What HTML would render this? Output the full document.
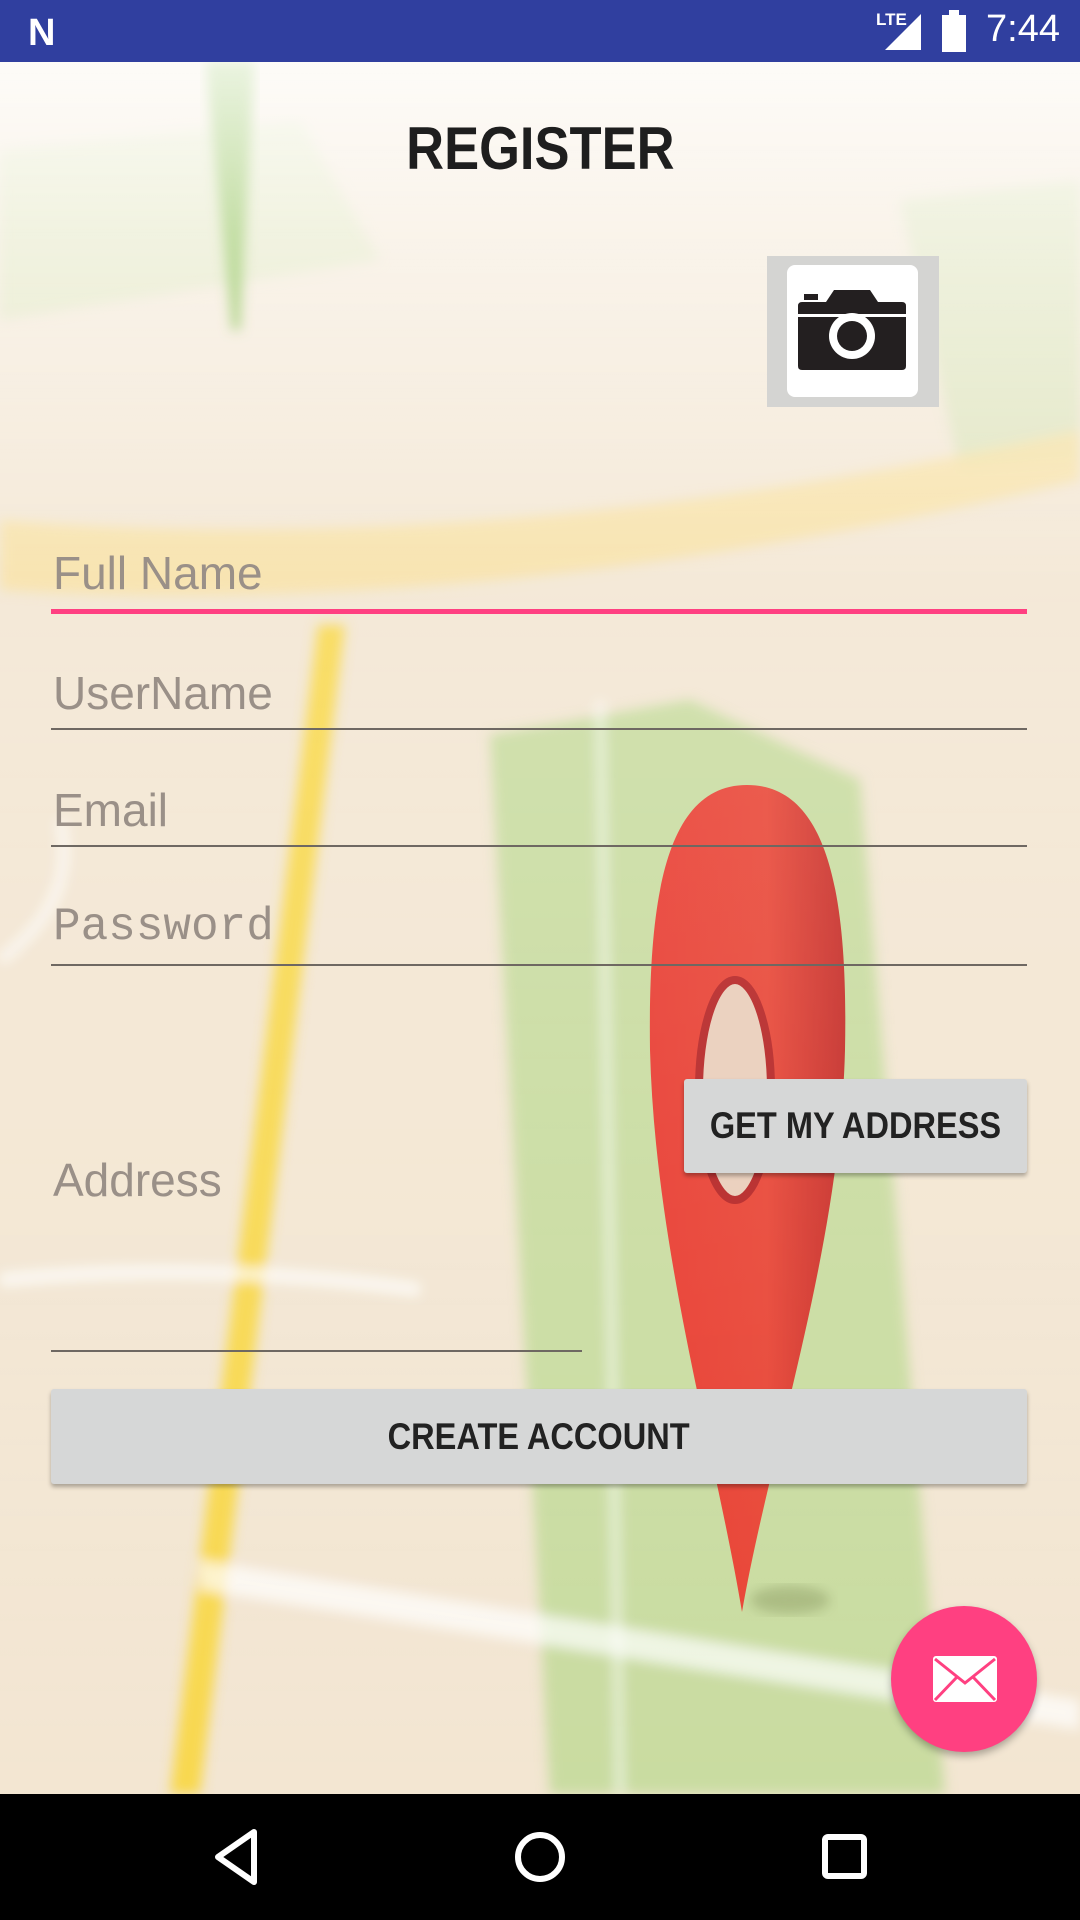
<!DOCTYPE html>
<html><head><meta charset="utf-8"><style>
html,body{margin:0;padding:0}
body{width:1080px;height:1920px;position:relative;overflow:hidden;font-family:"Liberation Sans",sans-serif;background:#f4e8d6}
.abs{position:absolute}
.hint{position:absolute;left:53px;font-size:46px;color:#9a9088;line-height:1}
.line{position:absolute;left:51px;width:976px;height:2px;background:#6e6862}
.btn{position:absolute;background:#d6d7d7;box-shadow:0 3px 4px rgba(0,0,0,.3);border-radius:3px;display:flex;align-items:center;justify-content:center;font-size:37px;font-weight:bold;color:#222}
.btn span{display:inline-block;transform:scaleX(.88)}
</style></head><body>
<svg class="abs" style="left:0;top:0" width="1080" height="1920" viewBox="0 0 1080 1920">
<defs>
<linearGradient id="fade" x1="0" y1="0" x2="0" y2="1">
<stop offset="0" stop-color="#fff" stop-opacity=".95"/><stop offset=".12" stop-color="#fff" stop-opacity=".55"/><stop offset=".3" stop-color="#fff" stop-opacity=".15"/><stop offset="1" stop-color="#fff" stop-opacity="0"/></linearGradient>
<linearGradient id="pin" x1="0" y1="0" x2="1" y2="0"><stop offset="0" stop-color="#e8392e"/><stop offset=".6" stop-color="#e84434"/><stop offset="1" stop-color="#c42a25"/></linearGradient>
<filter id="b"><feGaussianBlur stdDeviation="6"/></filter>
</defs>
<rect width="1080" height="1920" fill="#f3e6d2"/>
<g filter="url(#b)">
<path d="M0 150 L300 120 L380 260 L0 320Z" fill="#d9e2b4" opacity=".7"/>
<path d="M900 200 L1080 180 L1080 460 L960 470Z" fill="#cfe0a8" opacity=".6"/>
<path d="M490 735 L690 700 L860 780 L945 1794 L550 1794Z" fill="#c9dca0"/>
<path d="M0 520 Q500 560 1080 430 L1080 480 Q500 620 0 590Z" fill="#f7df9a" opacity=".8"/>
<path d="M318 625 L345 625 L200 1794 L170 1794Z" fill="#f8d84e"/>
<path d="M200 1560 L1080 1700 L1080 1730 L200 1590Z" fill="#fff" opacity=".7"/>
<path d="M0 1280 Q200 1260 420 1290" stroke="#fff" stroke-width="14" fill="none" opacity=".7"/>
<path d="M600 700 L620 1794" stroke="#fff" stroke-width="10" fill="none" opacity=".5"/>
<path d="M0 960 Q80 900 60 820" stroke="#fff" stroke-width="12" fill="none" opacity=".6"/>
</g>
<path d="M205 60 L255 60 L240 330 L232 330Z" fill="#7fb83e" filter="url(#b)"/>
<ellipse cx="790" cy="1600" rx="40" ry="14" fill="#8a9a60" opacity=".5" filter="url(#b)"/>
<path d="M747 785 C830 785 848 900 845 1050 C840 1250 770 1450 742 1612 C715 1450 655 1250 650 1050 C648 900 665 785 747 785Z" fill="url(#pin)"/>
<ellipse cx="735" cy="1090" rx="36" ry="110" fill="#e9cdb9"/>
<ellipse cx="735" cy="1090" rx="36" ry="110" fill="none" stroke="#b52222" stroke-width="8"/>
<rect width="1080" height="1920" fill="url(#fade)"/>
</svg>
<!-- status bar -->
<div class="abs" style="left:0;top:0;width:1080px;height:62px;background:#303f9f"></div>
<div class="abs" style="left:28px;top:12px;color:#fff;font-size:38px;font-weight:bold">N</div>
<div class="abs" style="left:876px;top:10px;color:#fff;font-size:17px;font-weight:bold">LTE</div>
<svg class="abs" style="left:885px;top:14px" width="38" height="36"><path d="M36 0 L36 36 L0 36Z" fill="#fff"/></svg>
<svg class="abs" style="left:942px;top:10px" width="24" height="42"><rect x="0" y="5" width="24" height="37" fill="#fff"/><rect x="7" y="0" width="10" height="6" fill="#fff"/></svg>
<div class="abs" style="left:986px;top:8px;color:#fff;font-size:38px">7:44</div>
<!-- title -->
<div class="abs" style="left:0;width:1080px;top:114px;text-align:center;font-size:60px;font-weight:bold;color:#1e1e1e"><span style="display:inline-block;transform:scaleX(.875)">REGISTER</span></div>
<!-- camera -->
<div class="abs" style="left:767px;top:256px;width:172px;height:151px;background:#d4d4d2"></div>
<div class="abs" style="left:787px;top:265px;width:131px;height:132px;background:#fff;border-radius:8px"></div>
<svg class="abs" style="left:796px;top:288px" width="112" height="84" viewBox="0 0 112 84"><path d="M6 14 H30 L38 2 H74 L82 14 H106 Q110 14 110 18 V78 Q110 82 106 82 H6 Q2 82 2 78 V18 Q2 14 6 14Z" fill="#231f20"/><rect x="8" y="6" width="14" height="6" fill="#231f20"/><rect x="2" y="26" width="108" height="3" fill="#fff"/><circle cx="56" cy="48" r="23" fill="#fff"/><circle cx="56" cy="48" r="15" fill="#231f20"/></svg>
<!-- fields -->
<div class="hint" style="top:550px">Full Name</div>
<div class="abs" style="left:51px;top:609px;width:976px;height:5px;background:#ff4081"></div>
<div class="hint" style="top:670px">UserName</div>
<div class="line" style="top:728px"></div>
<div class="hint" style="top:787px">Email</div>
<div class="line" style="top:845px"></div>
<div class="hint" style="top:904px;font-family:'Liberation Mono',monospace;font-size:46px">Password</div>
<div class="line" style="top:964px"></div>
<div class="btn" style="left:684px;top:1079px;width:343px;height:94px"><span>GET MY ADDRESS</span></div>
<div class="hint" style="top:1157px">Address</div>
<div class="line" style="top:1350px;width:531px"></div>
<div class="btn" style="left:51px;top:1389px;width:976px;height:95px"><span>CREATE ACCOUNT</span></div>
<!-- fab -->
<div class="abs" style="left:891px;top:1606px;width:146px;height:146px;border-radius:50%;background:#ff4081;box-shadow:0 4px 8px rgba(0,0,0,.3)"></div>
<svg class="abs" style="left:932px;top:1655px" width="66" height="48" viewBox="0 0 66 48"><rect x="1" y="1" width="64" height="46" rx="3" fill="#fff"/><path d="M3 4 L33 28 L63 4 M3 45 L25 22 M63 45 L41 22" stroke="#ff4081" stroke-width="3" fill="none"/></svg>
<!-- nav bar -->
<div class="abs" style="left:0;top:1794px;width:1080px;height:126px;background:#000"></div>
<svg class="abs" style="left:0;top:1794px" width="1080" height="126"><path d="M254 38 L218 63 L254 88Z" stroke="#fff" stroke-width="6" fill="none" stroke-linejoin="round"/><circle cx="540" cy="63" r="22" stroke="#fff" stroke-width="6" fill="none"/><rect x="825" y="43" width="39" height="39" rx="3" stroke="#fff" stroke-width="6" fill="none"/></svg>
</body></html>
